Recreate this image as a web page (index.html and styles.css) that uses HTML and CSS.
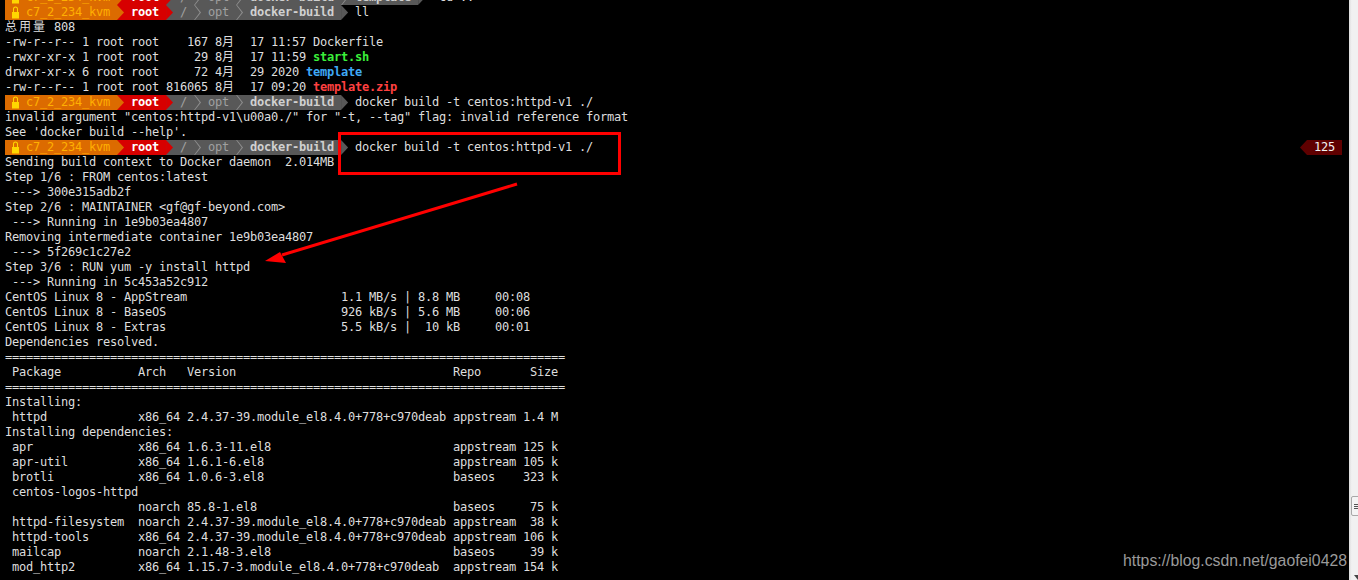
FILE: index.html
```html
<!DOCTYPE html>
<html lang="zh">
<head>
<meta charset="utf-8">
<title>docker build</title>
<link rel="stylesheet" href="styles.css">
</head>
<body>
<div class="app">
<main class="screen">
<div class="rows">
<div class="line prompt"><span class="seg host"><svg class="lock" viewBox="0 0 7 14"><path d="M1 7V4a2.5 2.5 0 0 1 5 0v3h1v6.500H0V7zM2 7h3V4a1.500 1.500 0 0 0-3 0z"/></svg><span class="hostname">c7_2_234_kvm </span></span><span class="seg user"><i class="arrow to-user"></i><b> root </b></span><span class="seg path"><i class="arrow to-path"></i><span> / </span><i class="thin"></i><span> opt </span><i class="thin"></i><b class="cwd"> docker-build </b><i class="thin"></i><b class="cwd"> template </b></span><i class="arrow end"></i><span>  cd ..</span></div>
<div class="line prompt"><span class="seg host"><svg class="lock" viewBox="0 0 7 14"><path d="M1 7V4a2.5 2.5 0 0 1 5 0v3h1v6.500H0V7zM2 7h3V4a1.500 1.500 0 0 0-3 0z"/></svg><span class="hostname">c7_2_234_kvm </span></span><span class="seg user"><i class="arrow to-user"></i><b> root </b></span><span class="seg path"><i class="arrow to-path"></i><span> / </span><i class="thin"></i><span> opt </span><i class="thin"></i><b class="cwd"> docker-build </b></span><i class="arrow end"></i><span> ll</span></div>
<div class="line"><span class="cjk3">总用量</span> 808</div>
<div class="line">-rw-r--r-- 1 root root    167 8<span class="cjk">月</span>  17 11:57 Dockerfile</div>
<div class="line">-rwxr-xr-x 1 root root     29 8<span class="cjk">月</span>  17 11:59 <b class="exec">start.sh</b></div>
<div class="line">drwxr-xr-x 6 root root     72 4<span class="cjk">月</span>  29 2020 <b class="dir">template</b></div>
<div class="line">-rw-r--r-- 1 root root 816065 8<span class="cjk">月</span>  17 09:20 <b class="zip">template.zip</b></div>
<div class="line prompt"><span class="seg host"><svg class="lock" viewBox="0 0 7 14"><path d="M1 7V4a2.5 2.5 0 0 1 5 0v3h1v6.500H0V7zM2 7h3V4a1.500 1.500 0 0 0-3 0z"/></svg><span class="hostname">c7_2_234_kvm </span></span><span class="seg user"><i class="arrow to-user"></i><b> root </b></span><span class="seg path"><i class="arrow to-path"></i><span> / </span><i class="thin"></i><span> opt </span><i class="thin"></i><b class="cwd"> docker-build </b></span><i class="arrow end"></i><span> docker build -t centos:httpd-v1 ./</span></div>
<div class="line">invalid argument "centos:httpd-v1\u00a0./" for "-t, --tag" flag: invalid reference format</div>
<div class="line">See 'docker build --help'.</div>
<div class="line prompt"><span class="seg host"><svg class="lock" viewBox="0 0 7 14"><path d="M1 7V4a2.5 2.5 0 0 1 5 0v3h1v6.500H0V7zM2 7h3V4a1.500 1.500 0 0 0-3 0z"/></svg><span class="hostname">c7_2_234_kvm </span></span><span class="seg user"><i class="arrow to-user"></i><b> root </b></span><span class="seg path"><i class="arrow to-path"></i><span> / </span><i class="thin"></i><span> opt </span><i class="thin"></i><b class="cwd"> docker-build </b></span><i class="arrow end"></i><span> docker build -t centos:httpd-v1 ./</span><span class="status"><i class="status-tip"></i><span class="status-code"> 125 </span></span></div>
<div class="line">Sending build context to Docker daemon  2.014MB</div>
<div class="line">Step 1/6 : FROM centos:latest</div>
<div class="line"> ---&gt; 300e315adb2f</div>
<div class="line">Step 2/6 : MAINTAINER &lt;gf@gf-beyond.com&gt;</div>
<div class="line"> ---&gt; Running in 1e9b03ea4807</div>
<div class="line">Removing intermediate container 1e9b03ea4807</div>
<div class="line"> ---&gt; 5f269c1c27e2</div>
<div class="line">Step 3/6 : RUN yum -y install httpd</div>
<div class="line"> ---&gt; Running in 5c453a52c912</div>
<div class="line">CentOS Linux 8 - AppStream                      1.1 MB/s | 8.8 MB     00:08</div>
<div class="line">CentOS Linux 8 - BaseOS                         926 kB/s | 5.6 MB     00:06</div>
<div class="line">CentOS Linux 8 - Extras                         5.5 kB/s |  10 kB     00:01</div>
<div class="line">Dependencies resolved.</div>
<div class="line">================================================================================</div>
<div class="line"> Package           Arch   Version                               Repo       Size</div>
<div class="line">================================================================================</div>
<div class="line">Installing:</div>
<div class="line"> httpd             x86_64 2.4.37-39.module_el8.4.0+778+c970deab appstream 1.4 M</div>
<div class="line">Installing dependencies:</div>
<div class="line"> apr               x86_64 1.6.3-11.el8                          appstream 125 k</div>
<div class="line"> apr-util          x86_64 1.6.1-6.el8                           appstream 105 k</div>
<div class="line"> brotli            x86_64 1.0.6-3.el8                           baseos    323 k</div>
<div class="line"> centos-logos-httpd</div>
<div class="line">                   noarch 85.8-1.el8                            baseos     75 k</div>
<div class="line"> httpd-filesystem  noarch 2.4.37-39.module_el8.4.0+778+c970deab appstream  38 k</div>
<div class="line"> httpd-tools       x86_64 2.4.37-39.module_el8.4.0+778+c970deab appstream 106 k</div>
<div class="line"> mailcap           noarch 2.1.48-3.el8                          baseos     39 k</div>
<div class="line"> mod_http2         x86_64 1.15.7-3.module_el8.4.0+778+c970deab  appstream 154 k</div>
</div>
<svg class="annotations" viewBox="0 0 1349 580" aria-hidden="true">
<rect class="box" x="339.500" y="133.500" width="280" height="40"/>
<line class="shaft" x1="517" y1="184" x2="282" y2="255"/>
<polygon class="head" points="265,261 280,252 286,263"/>
</svg>
<div class="watermark">https://blog.csdn.net/gaofei0428</div>
</main>
<aside class="scrollbar"><div class="thumb"><i></i><i></i><i></i></div><div class="down"></div></aside>
</div>
</body>
</html>
```
FILE: styles.css
```css
* { box-sizing: border-box; }
html, body { margin: 0; height: 100%; overflow: hidden; background: #000; }
.app { display: flex; width: 1358px; height: 580px; overflow: hidden; }
.screen { position: relative; flex: 1; background: #000; overflow: hidden; }
.rows {
  margin-top: -10px;
  padding-left: 5px;
  font-family: "DejaVu Sans Mono", "Noto Sans CJK SC", monospace;
  font-size: 12px;
  letter-spacing: -0.224px;
  color: #dedede;
}
.line { height: 15px; line-height: 15px; white-space: pre; }
.prompt { display: flex; }
b { font-weight: 700; }
.cjk, .cjk3 { display: inline-block; font-size: 12px; }
.cjk { width: 14px; letter-spacing: 0; }
.cjk3 { width: 42px; letter-spacing: 2px; }
.exec { color: #3bf03b; }
.dir { color: #3fa9f5; }
.zip { color: #ff4040; }

.seg { display: flex; height: 15px; flex: none; }
.host { background: #dc6b00; padding-left: 7px; color: #ffb000; }
.lock { width: 7px; height: 14px; margin-right: 7px; fill: #ffd700; }
.user { background: #d70000; color: #fff; }
.path { background: #585858; color: #a0a0a0; }
.cwd { color: #d0d0d0; }
.arrow { display: block; flex: none; width: 7px; height: 15px; clip-path: polygon(0 0, 100% 50%, 0 100%); }
.to-user { background: #dc6b00; }
.to-path { background: #d70000; }
.end { background: #585858; }
.thin { display: block; flex: none; width: 7px; height: 15px; background: #8c8c8c; clip-path: polygon(0 0, 14% 0, 100% 50%, 14% 100%, 0 100%, 80% 50%); }

.status { display: flex; margin-left: auto; margin-right: 7px; }
.status-tip { display: block; width: 7px; height: 15px; background: #5f0000; clip-path: polygon(100% 0, 100% 100%, 0 50%); }
.status-code { background: #5f0000; color: #f2f2f2; }

.annotations { position: absolute; inset: 0; width: 1349px; height: 580px; }
.box { fill: none; stroke: #f00; stroke-width: 3; }
.shaft { stroke: #f00; stroke-width: 3; }
.head { fill: #f00; }

.watermark {
  position: absolute;
  right: 2px;
  top: 551px;
  font-family: "Liberation Sans", Arial, sans-serif;
  font-size: 15.800px;
  line-height: 20px;
  color: #9a9a9a;
  white-space: nowrap;
}

.scrollbar { position: relative; flex: none; width: 9px; background: linear-gradient(90deg, #dcdcdc, #f1f1f1 30%, #f1f1f1); }
.thumb {
  position: absolute;
  left: 2px;
  top: 496px;
  width: 12px;
  height: 20px;
  display: flex;
  flex-direction: column;
  gap: 1px;
  justify-content: center;
  padding-left: 2px;
  background: #f4f4f4;
  border: 1px solid #a8a8a8;
  border-radius: 2px;
}
.thumb i { display: block; width: 6px; height: 1px; background: #555; }
.down {
  position: absolute;
  left: 5px;
  top: 575px;
  width: 8px;
  height: 5px;
  background: #444;
  clip-path: polygon(0 0, 100% 0, 50% 100%);
}
```
